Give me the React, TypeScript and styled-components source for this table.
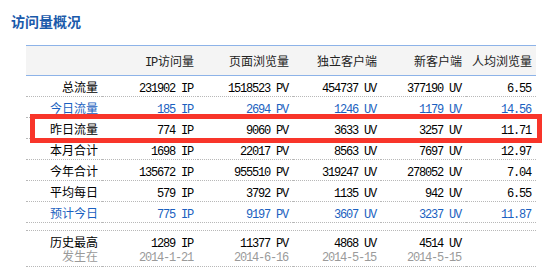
import React from 'react';
import styled, { createGlobalStyle } from 'styled-components';

type Tone = 'normal' | 'blue' | 'muted';

interface StatRow {
  label: string;
  tone?: Tone;
  ip: string;
  pv: string;
  uv: string;
  newUv: string;
  avg: string;
}

const rows: StatRow[] = [
  { label: '总流量', ip: '231902', pv: '1518523', uv: '454737', newUv: '377190', avg: '6.55' },
  { label: '今日流量', tone: 'blue', ip: '185', pv: '2694', uv: '1246', newUv: '1179', avg: '14.56' },
  { label: '昨日流量', ip: '774', pv: '9060', uv: '3633', newUv: '3257', avg: '11.71' },
  { label: '本月合计', ip: '1698', pv: '22017', uv: '8563', newUv: '7697', avg: '12.97' },
  { label: '今年合计', ip: '135672', pv: '955510', uv: '319247', newUv: '278052', avg: '7.04' },
  { label: '平均每日', ip: '579', pv: '3792', uv: '1135', newUv: '942', avg: '6.55' },
  { label: '预计今日', tone: 'blue', ip: '775', pv: '9197', uv: '3607', newUv: '3237', avg: '11.87' },
];

const history = {
  values: ['1289 IP', '11377 PV', '4868 UV', '4514 UV'],
  dates: ['2014-1-21', '2014-6-16', '2014-5-15', '2014-5-15'],
};

const toneColor: Record<Tone, string> = {
  normal: '#000',
  blue: '#1a5fc0',
  muted: '#9a9a9a',
};

const GlobalStyle = createGlobalStyle`
  html, body {
    margin: 0;
    background: #fff;
  }
  body {
    font-family: "Noto Sans CJK SC", "DejaVu Sans", sans-serif;
  }
`;

const Page = styled.div`
  padding: 12px 0 0 11px;
`;

const Title = styled.h2`
  margin: 0;
  font-size: 14px;
  line-height: 18px;
  font-weight: bold;
  color: #1a5aab;
`;

const Panel = styled.div`
  position: relative;
  width: 510px;
  margin: 15px 0 0 15px;
`;

const Table = styled.table`
  width: 510px;
  table-layout: fixed;
  border-collapse: separate;
  border-spacing: 0;
  font-size: 12px;
`;

const Th = styled.th`
  height: 28px;
  padding: 1px 4px 0 0;
  background: #f4f4f4;
  border-top: 1px solid #8db3e8;
  border-bottom: 1px solid #8db3e8;
  text-align: right;
  font-weight: normal;
  color: #222;
  white-space: nowrap;
  line-height: 14px;
`;

const Td = styled.td<{ $tone?: Tone }>`
  height: 18px;
  padding: 2px 4px 0 0;
  border-bottom: 1px dotted #b8b8b8;
  text-align: right;
  color: ${(p) => toneColor[p.$tone ?? 'normal']};
  white-space: nowrap;
  line-height: 14px;
`;

const Spacer = styled.td`
  height: 7px;
  padding: 0;
  border-bottom: 1px dotted #b8b8b8;
`;

const StackTd = styled(Td)`
  height: 28px;
  padding: 4px 4px 3px 0;
  line-height: 14px;
  vertical-align: top;
`;

const Line = styled.div<{ $tone?: Tone }>`
  height: 14px;
  color: ${(p) => toneColor[p.$tone ?? 'normal']};
`;

const Num = styled.span`
  font-family: "Liberation Mono", "DejaVu Sans Mono", monospace;
  font-size: 12px;
  line-height: 11px;
  letter-spacing: -1.2px;
  margin-right: 1px;
`;

const Highlight = styled.div`
  position: absolute;
  left: 4px;
  top: 69px;
  width: 512px;
  height: 29px;
  box-sizing: border-box;
  border: 5px solid #f8352a;
  pointer-events: none;
`;

const widths = [76, 96, 95, 88, 85, 70];

export default function App() {
  return (
    <>
      <GlobalStyle />
      <Page>
        <Title>访问量概况</Title>
        <Panel>
          <Table>
            <colgroup>
              {widths.map((w, i) => (
                <col key={i} style={{ width: w }} />
              ))}
            </colgroup>
            <thead>
              <tr>
                <Th />
                <Th>
                  <Num>IP</Num>访问量
                </Th>
                <Th>页面浏览量</Th>
                <Th>独立客户端</Th>
                <Th>新客户端</Th>
                <Th>人均浏览量</Th>
              </tr>
            </thead>
            <tbody>
              {rows.map((r) => (
                <tr key={r.label}>
                  <Td $tone={r.tone}>{r.label}</Td>
                  <Td $tone={r.tone}>
                    <Num>{r.ip} IP</Num>
                  </Td>
                  <Td $tone={r.tone}>
                    <Num>{r.pv} PV</Num>
                  </Td>
                  <Td $tone={r.tone}>
                    <Num>{r.uv} UV</Num>
                  </Td>
                  <Td $tone={r.tone}>
                    <Num>{r.newUv} UV</Num>
                  </Td>
                  <Td $tone={r.tone}>
                    <Num>{r.avg}</Num>
                  </Td>
                </tr>
              ))}
              <tr>
                <Spacer colSpan={6} />
              </tr>
              <tr>
                <StackTd>
                  <Line>历史最高</Line>
                  <Line $tone="muted">发生在</Line>
                </StackTd>
                {history.values.map((v, i) => (
                  <StackTd key={v}>
                    <Line>
                      <Num>{v}</Num>
                    </Line>
                    <Line $tone="muted">
                      <Num>{history.dates[i]}</Num>
                    </Line>
                  </StackTd>
                ))}
                <StackTd />
              </tr>
            </tbody>
          </Table>
          <Highlight />
        </Panel>
      </Page>
    </>
  );
}
